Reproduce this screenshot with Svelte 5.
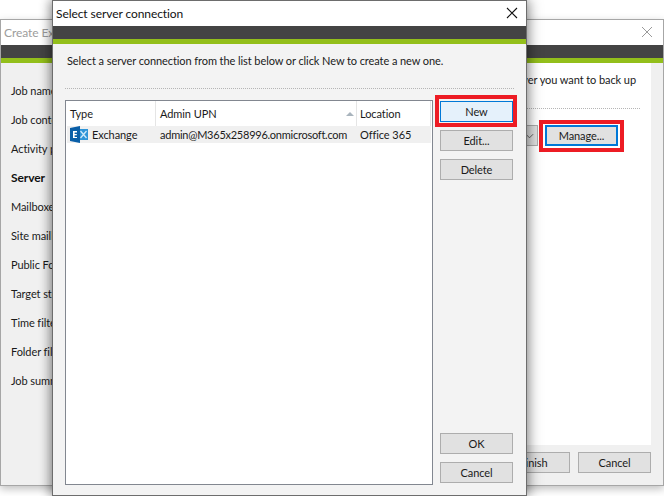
<script>
  const steps = [
    { label: 'Job name', bold: false },
    { label: 'Job contents', bold: false },
    { label: 'Activity policy', bold: false },
    { label: 'Server', bold: true },
    { label: 'Mailboxes', bold: false },
    { label: 'Site mailboxes', bold: false },
    { label: 'Public Folders', bold: false },
    { label: 'Target storage', bold: false },
    { label: 'Time filter', bold: false },
    { label: 'Folder filter', bold: false },
    { label: 'Job summary', bold: false }
  ];
</script>

<div class="desktop">
  <section class="win back">
    <header class="title">
      <span class="title-text">Create Exchange backup job</span>
      <svg class="close" viewBox="0 0 12 12" width="12" height="12"><path d="M1 1l10 10M11 1L1 11" stroke="#9a9a9a" stroke-width="1" fill="none"/></svg>
    </header>
    <div class="band"></div>
    <div class="back-body">
      <nav class="steps">
        {#each steps as s}
          <div class="step" class:bold={s.bold}>{s.label}</div>
        {/each}
      </nav>
      <div class="back-main">
        <div class="back-content">
          <p class="back-text">Select the server you want to back up</p>
          <div class="dots back-dots"></div>
          <div class="back-row">
            <div class="combo">
              <svg viewBox="0 0 10 6" width="9" height="6"><path d="M1 1l4 4 4-4" stroke="#555" stroke-width="1" fill="none"/></svg>
            </div>
            <div class="mark mark-manage"><button class="btn focus">Manage...</button></div>
          </div>
        </div>
        <div class="back-foot">
          <button class="btn">Finish</button>
          <button class="btn">Cancel</button>
        </div>
      </div>
    </div>
  </section>

  <section class="win front">
    <header class="title front-title">
      <span class="title-text dark">Select server connection</span>
      <svg class="close" viewBox="0 0 12 12" width="12" height="12"><path d="M1 1l10 10M11 1L1 11" stroke="#111" stroke-width="1.1" fill="none"/></svg>
    </header>
    <div class="band"></div>
    <div class="front-body">
      <p class="lead">Select a server connection from the list below or click New to create a new one.</p>
      <div class="dots"></div>
      <div class="front-main">
        <div class="list">
          <div class="row head">
            <div class="col c1">Type</div>
            <div class="col c2">Admin UPN
              <svg class="sort" viewBox="0 0 8 4" width="8" height="4"><path d="M4 0l4 4H0z" fill="#a9b4bd"/></svg>
            </div>
            <div class="col c3">Location</div>
          </div>
          <div class="row item">
            <div class="col c1 typecell">
              <svg class="ex" viewBox="0 0 18 17" width="18" height="17">
                <rect x="8" y="3" width="10" height="11" fill="#2f95d8"/>
                <path d="M10.5 5l6 7M16.5 5l-6 7" stroke="#cfe9f9" stroke-width="1.3"/>
                <path d="M0 2l10-2v17L0 15z" fill="#0a5fa8"/>
                <path d="M3 5h4v1.4H4.6v1.5h2.2v1.4H4.6v1.6H7V12H3z" fill="#fff"/>
              </svg>
              Exchange
            </div>
            <div class="col c2 upn">admin@M365x258996.onmicrosoft.com</div>
            <div class="col c3">Office 365</div>
          </div>
        </div>
        <div class="actions">
          <div class="mark mark-new"><button class="btn hot">New</button></div>
          <button class="btn">Edit...</button>
          <button class="btn">Delete</button>
          <div class="spacer"></div>
          <button class="btn">OK</button>
          <button class="btn">Cancel</button>
        </div>
      </div>
    </div>
  </section>
</div>

<style>
  :global(body) { margin: 0; background: #fff; }
  .desktop {
    position: relative;
    width: 664px;
    height: 496px;
    overflow: hidden;
    background: #fff;
    font-family: "Lato", "Noto Sans", sans-serif;
    font-size: 11px;
    letter-spacing: -0.08px;
    color: #1a1a1a;
  }
  .win { position: absolute; box-sizing: border-box; display: flex; flex-direction: column; }
  .back {
    left: 0; top: 19px; width: 664px; height: 467px;
    border: 1px solid #a6a6a6;
    background: #f0f0f0;
    box-shadow: 0 3px 8px rgba(0,0,0,.25);
  }
  .front {
    left: 52px; top: 0; width: 475px; height: 496px;
    border: 1px solid #6d6d6d;
    background: #f3f3f3;
    box-shadow: 3px 0 12px rgba(0,0,0,.35), -3px 0 10px rgba(0,0,0,.3);
  }
  .title {
    height: 25px; background: #fff; display: flex; align-items: center;
    justify-content: space-between; padding: 0 8px 0 3px; flex: none;
    font-size: 12px; letter-spacing: -0.08px;
  }
  .back .title { padding-right: 10px; }
  .title-text { color: #9c9c9c; }
  .title-text.dark { color: #111; }
  .close { margin-top: -2px; }
  .band {
    height: 13px; background: #444; border-bottom: 5px solid #93bf1b; flex: none;
  }
  .back-body { flex: 1; display: flex; min-height: 0; }
  .steps { width: 108px; padding: 20px 0 0 10px; box-sizing: border-box; display: flex; flex-direction: column; }
  .step { height: 29px; line-height: 16px; white-space: nowrap; }
  .step.bold { font-weight: 700; color: #111; font-size: 12px; }
  .back-main { flex: 1; display: flex; flex-direction: column; padding-right: 12px; min-width: 0; }
  .back-content { flex: 1; background: #fff; padding: 7px 0 0 0; }
  .back-text { margin: 0; text-align: right; padding-right: 15px; white-space: nowrap; height: 38px; line-height: 20px; }
  .back-dots { margin: 0 11px 0 0; }
  .back-row { display: flex; justify-content: flex-end; padding: 16px 33px 0 0; gap: 7px; }
  .combo {
    width: 60px; height: 21px; border: 1px solid #adadad; box-sizing: border-box;
    display: flex; align-items: center; justify-content: flex-end; padding-right: 3px; background: #e1e1e1;
  }
  .back-foot { height: 40px; display: flex; justify-content: flex-end; gap: 8px; padding: 7px 0 0 0; box-sizing: border-box; }
  .back-foot .btn { width: 73px; }

  .front-body { flex: 1; display: flex; flex-direction: column; padding: 0 12px; min-height: 0; }
  .lead { margin: 0; padding: 8px 0 0 2px; height: 44px; line-height: 18px; white-space: nowrap; box-sizing: border-box; }
  .dots { border-top: 1px dotted #b5b5b5; height: 0; flex: none; }
  .front-main { flex: 1; display: flex; gap: 7px; padding: 11px 0 10px; min-height: 0; }
  .list { width: 368px; box-sizing: border-box; border: 1px solid #828790; background: #fff; }
  .row { display: flex; align-items: center; }
  .head { height: 25px; }
  .head .col { border-right: 1px solid #e5e5e5; height: 25px; line-height: 26px; }
  .item { height: 17px; background: #f0f0f0; margin: 0 0 0 1px; width: 364px; }
  .col { box-sizing: border-box; padding-left: 4px; white-space: nowrap; position: relative; }
  .c1 { width: 90px; }
  .c2 { width: 201px; }
  .c3 { width: 74px; padding-left: 3px; }
  .item .c1 { width: 89px; }
  .upn { letter-spacing: -0.25px; }
  .typecell { display: flex; align-items: center; gap: 4px; padding-left: 3px; }
  .ex { flex: none; }
  .sort { position: absolute; right: 2px; top: 11px; }

  .actions { width: 73px; display: flex; flex-direction: column; gap: 8px; padding: 1px 0 2px; box-sizing: border-box; }
  .spacer { flex: 1; margin: -8px 0; }
  .btn {
    width: 73px; height: 21px; padding: 0; box-sizing: border-box; font: inherit; letter-spacing: inherit; color: #1a1a1a;
    background: #e1e1e1; border: 1px solid #adadad; border-radius: 0; display: block;
  }
  .btn.hot { background: #e5f1fb; border: 1px solid #0078d7; }
  .btn.focus { border: 2px solid #0078d7; }
  .mark { position: relative; }
  .mark::after {
    content: ""; position: absolute; border: 4px solid #ed1c24; pointer-events: none;
  }
  .mark-new::after { inset: -6px -4px -5px -5px; }
  .mark-manage::after { inset: -5px -6px -6px -6px; }
</style>
